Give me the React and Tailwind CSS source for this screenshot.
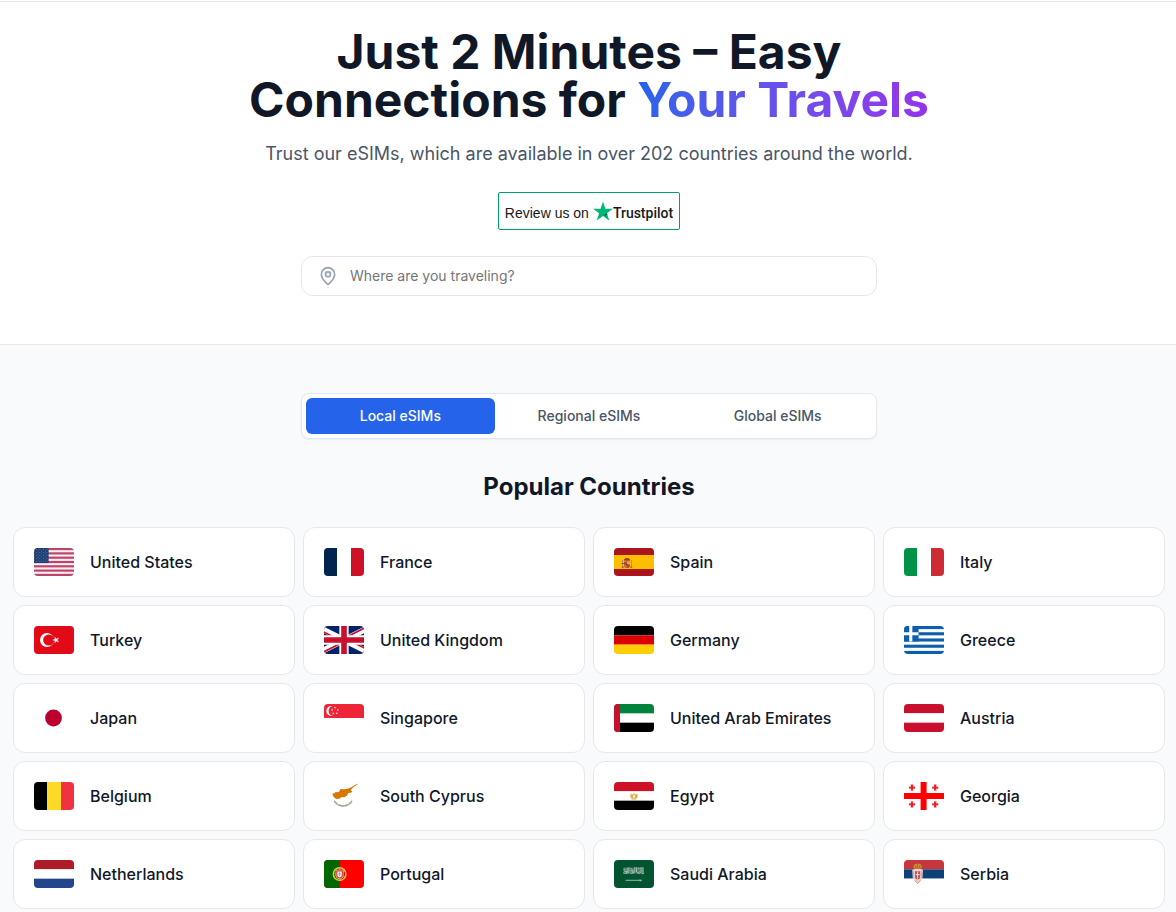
import { useState } from 'react';
import { MapPin } from 'lucide-react';

const TABS = ['Local eSIMs', 'Regional eSIMs', 'Global eSIMs'];

const COUNTRIES = [
  { code: 'us', name: 'United States', flag: UsFlag },
  { code: 'fr', name: 'France', flag: FranceFlag },
  { code: 'es', name: 'Spain', flag: SpainFlag },
  { code: 'it', name: 'Italy', flag: ItalyFlag },
  { code: 'tr', name: 'Turkey', flag: TurkeyFlag },
  { code: 'gb', name: 'United Kingdom', flag: UkFlag },
  { code: 'de', name: 'Germany', flag: GermanyFlag },
  { code: 'gr', name: 'Greece', flag: GreeceFlag },
  { code: 'jp', name: 'Japan', flag: JapanFlag },
  { code: 'sg', name: 'Singapore', flag: SingaporeFlag },
  { code: 'ae', name: 'United Arab Emirates', flag: UaeFlag },
  { code: 'at', name: 'Austria', flag: AustriaFlag },
  { code: 'be', name: 'Belgium', flag: BelgiumFlag },
  { code: 'cy', name: 'South Cyprus', flag: CyprusFlag },
  { code: 'eg', name: 'Egypt', flag: EgyptFlag },
  { code: 'ge', name: 'Georgia', flag: GeorgiaFlag },
  { code: 'nl', name: 'Netherlands', flag: NetherlandsFlag },
  { code: 'pt', name: 'Portugal', flag: PortugalFlag },
  { code: 'sa', name: 'Saudi Arabia', flag: SaudiFlag },
  { code: 'rs', name: 'Serbia', flag: SerbiaFlag },
];

// 3:2 flags use a 42x28 box, 2:1 flags 56x28; both are cropped to 40x28
function Flag({ width = 42, children }) {
  return (
    <svg
      viewBox={`0 0 ${width} 28`}
      preserveAspectRatio="xMidYMid slice"
      className="h-7 w-10 shrink-0 rounded"
      aria-hidden="true"
    >
      <rect width={width} height="28" fill="#fff" />
      {children}
    </svg>
  );
}

function VerticalBands({ colors }) {
  return (
    <Flag>
      {colors.map((color, i) => (
        <rect key={color} x={i * 14} width="14" height="28" fill={color} />
      ))}
    </Flag>
  );
}

function HorizontalBands({ colors, children }) {
  return (
    <Flag>
      {colors.map((color, i) => (
        <rect key={i} y={(i * 28) / 3} width="42" height={28 / 3} fill={color} />
      ))}
      {children}
    </Flag>
  );
}

function FranceFlag() {
  return <VerticalBands colors={['#00264f', '#ffffff', '#ce1127']} />;
}

function ItalyFlag() {
  return <VerticalBands colors={['#009246', '#ffffff', '#ce2b37']} />;
}

function BelgiumFlag() {
  return <VerticalBands colors={['#000000', '#fdda25', '#ef3340']} />;
}

function GermanyFlag() {
  return <HorizontalBands colors={['#000000', '#dd0000', '#ffce00']} />;
}

function AustriaFlag() {
  return <HorizontalBands colors={['#c8102e', '#ffffff', '#c8102e']} />;
}

function NetherlandsFlag() {
  return <HorizontalBands colors={['#ae1c28', '#ffffff', '#21468b']} />;
}

function UsFlag() {
  const stripe = 28 / 13;
  const stars = [];
  for (let row = 0; row < 9; row++) {
    for (let col = 0; col < (row % 2 ? 5 : 6); col++) {
      stars.push([1.8 + col * 3.55 + (row % 2 ? 1.78 : 0), 1.5 + row * 1.5]);
    }
  }
  return (
    <Flag width={53.2}>
      <rect width="53.2" height="28" fill="#fbeef2" />
      {[0, 1, 2, 3, 4, 5, 6].map((i) => (
        <rect key={i} y={i * stripe * 2} width="53.2" height={stripe} fill="#bc4468" />
      ))}
      <rect width="21.2" height={stripe * 7} fill="#1d3f74" />
      {stars.map(([cx, cy]) => (
        <circle key={`${cx}-${cy}`} cx={cx} cy={cy} r="0.45" fill="#8ea3c0" />
      ))}
    </Flag>
  );
}

function SpainFlag() {
  return (
    <Flag>
      <rect width="42" height="28" fill="#aa151b" />
      <rect y="7" width="42" height="14" fill="#fbbf00" />
      <path d="M9.5 12v7M18.4 12v7" stroke="#b98a5d" strokeWidth="1" />
      <path d="M8.8 19.2h2M17.2 19.2h2M8.6 15.5h2.2" stroke="#8f3b32" strokeWidth="0.9" />
      <path d="M11 13.6h6v3.6a3 2.8 0 0 1-6 0z" fill="#b4442d" />
      <path d="M14 13.6h3v3H14z" fill="#c9a3a0" />
      <path d="M11 16.7h3v3a3 3 0 0 1-3-3z" fill="#c97a20" />
      <path d="M11.3 12.8c-1-1.7.5-2.5 2.7-2.8 2.2.3 3.7 1.1 2.7 2.8z" fill="#a8392b" />
      <circle cx="14" cy="16.7" r="1" fill="#5b4a73" />
    </Flag>
  );
}

function TurkeyFlag() {
  return (
    <Flag>
      <rect width="42" height="28" fill="#e30a17" />
      <circle cx="14" cy="14" r="7" fill="#fff" />
      <circle cx="15.75" cy="14" r="5.6" fill="#e30a17" />
      <path d="M19.2 14l2.6-.85v-2.7l1.6 2.2 2.6-.85L24.4 14l1.6 2.2-2.6-.85-1.6 2.2v-2.7z" fill="#fff" />
    </Flag>
  );
}

function UkFlag() {
  return (
    <Flag width={56}>
      <rect width="56" height="28" fill="#012169" />
      <path d="M0 0l56 28M56 0L0 28" stroke="#fff" strokeWidth="5.6" />
      <path
        d="M-.8 1.7L27.2 15.7M28.8 12.3L56.8 26.3M55.2-1.3L27.2 12.7M28.8 15.3L.8 29.3"
        stroke="#c8102e"
        strokeWidth="1.7"
      />
      <path d="M28 0v28M0 14h56" stroke="#fff" strokeWidth="9.3" />
      <path d="M28 0v28M0 14h56" stroke="#c8102e" strokeWidth="5.6" />
    </Flag>
  );
}

function GreeceFlag() {
  const stripe = 28 / 9;
  return (
    <Flag>
      {[0, 2, 4, 6, 8].map((i) => (
        <rect key={i} y={i * stripe} width="42" height={stripe} fill="#0d5eaf" />
      ))}
      <rect width={stripe * 5} height={stripe * 5} fill="#0d5eaf" />
      <path
        d={`M${stripe * 2.5} 0v${stripe * 5}M0 ${stripe * 2.5}h${stripe * 5}`}
        stroke="#fff"
        strokeWidth={stripe}
      />
    </Flag>
  );
}

function JapanFlag() {
  return (
    <Flag>
      <circle cx="20.5" cy="14" r="8.4" fill="#bc002d" />
    </Flag>
  );
}

function SingaporeFlag() {
  return (
    <Flag>
      <rect width="42" height="14" fill="#ee2536" />
      <circle cx="8.3" cy="7" r="5" fill="#fff" />
      <circle cx="10.4" cy="7" r="4.9" fill="#ee2536" />
      {[[12, 3.6], [9.2, 5.9], [14.8, 5.9], [10.3, 9.3], [13.7, 9.3]].map(([cx, cy]) => (
        <circle key={`${cx}-${cy}`} cx={cx} cy={cy} r="0.85" fill="#fbc4c9" />
      ))}
    </Flag>
  );
}

function UaeFlag() {
  return (
    <Flag width={56}>
      <rect width="56" height="9.33" fill="#00843d" />
      <rect y="18.67" width="56" height="9.33" fill="#000" />
      <rect width="14" height="28" fill="#c8102e" />
    </Flag>
  );
}

function CyprusFlag() {
  return (
    <Flag>
      <path
        d="M9.6 11.6l1.8-.3 1.3-1.2 2.3.2 1.4-1 1-2.4 3.5.3 3.6-.4 3.4-1.3 3.6-2.3 3.2-1.6-.4.9-3.3 2.3-2.6 2.5-.5 1.3 1.4.6-1.2 1.5-2.8.3-1.2 2.5-2.7 1.8-2.8-.3-1.8 1.6-3.3.4-2.4-1.4-1.4-2.3z"
        fill="#d57800"
      />
      <path
        d="M11.3 18.8c1.4 3.3 4.6 5 8.8 5.2M28.9 18.8c-1.4 3.3-4.6 5-8.8 5.2"
        fill="none"
        stroke="#9da28f"
        strokeWidth="1.5"
      />
      <path d="M12 20.8l3 .2M14 22.8l3.4-.7M28.2 20.8l-3 .2M26.2 22.8l-3.4-.7M18.7 24.8l2.8-1.2" stroke="#b7bbae" strokeWidth="0.9" />
    </Flag>
  );
}

function EgyptFlag() {
  return (
    <HorizontalBands colors={['#ce1126', '#ffffff', '#000000']}>
      <path d="M17.4 11.4l2.6.8.6-1.1h.8l.6 1.1 2.6-.8v4.4l-1.6 1.2h-4l-1.6-1.2z" fill="#e6c875" />
      <path d="M18.2 12.4v3.2M19.4 12.6v3.4M22.6 12.6v3.4M23.8 12.4v3.2M18.6 17.2h4.8" stroke="#c99f3a" strokeWidth="0.6" />
      <path d="M20.1 13.2h1.8v2.3l-.9.8-.9-.8z" fill="#f6edd4" />
    </HorizontalBands>
  );
}

function GeorgiaFlag() {
  return (
    <Flag>
      <path d="M20.6 0v28M0 14h42" stroke="#f00" strokeWidth="6" />
      {[[9, 5.6], [32.2, 5.6], [9, 22.4], [32.2, 22.4]].map(([x, y]) => (
        <path
          key={`${x}-${y}`}
          d={`M${x - 3} ${y - 1.2}l2 .3-.3-2.1h2.6l-.3 2.1 2-.3v2.4l-2-.3.3 2.1h-2.6l.3-2.1-2 .3z`}
          fill="#ee1c25"
        />
      ))}
    </Flag>
  );
}

function PortugalFlag() {
  return (
    <Flag>
      <rect width="42" height="28" fill="#f00" />
      <rect width="16.8" height="28" fill="#060" />
      <circle cx="16.6" cy="14" r="6.3" fill="none" stroke="#dfc92e" strokeWidth="1.5" />
      <path d="M10.6 12.3c4 3.4 8.4 4.6 11.8 4M10.8 16.8c4-3.6 8-5.2 11.4-5.4M16.6 7.8v12.4" fill="none" stroke="#c9b22e" strokeWidth="0.7" />
      <path d="M12.9 10h7.4v5a3.7 3.9 0 0 1-7.4 0z" fill="#d8362f" stroke="#eed7ad" strokeWidth="0.6" />
      <path d="M14.4 11.4h4.4v3.6a2.2 2.4 0 0 1-4.4 0z" fill="#eef0f5" />
      <path d="M16.6 12v4.4M15 13.9h3.2" stroke="#7c8fbf" strokeWidth="0.7" />
    </Flag>
  );
}

function SaudiFlag() {
  return (
    <Flag>
      <rect width="42" height="28" fill="#005430" />
      <rect x="10.4" y="7.6" width="20" height="6" fill="#3f7d60" />
      <g fill="none" stroke="#b9d0c4" strokeWidth="0.8" strokeLinecap="round">
        <path d="M10.6 9.2c1.2-1 2 .4.8 1.2M10.5 13c1.6.9 3.4.6 3.7-.8V8M15.9 7.5v4.4c0 1.4-2 1.8-2.8 1" />
        <path d="M17.4 13.2c2 .6 3-.5 2.8-2.2L18 8.2M21.8 7.3v4c0 1.6-1.2 2-2.4 1.8M23.6 7.5v4.6c.8 1.4 2.6 1.1 2.8-.4" />
        <path d="M25.2 8c1.1-.6 1.7.6.8 1.3M28 7.4v4.5c-.2 1.2-1.6 1.7-2.5 1.4M29.9 7.4l.2 5.4M11.8 11.5h2M17.5 10.7l2 .4M29 13.6h1.5" />
      </g>
      <path d="M13 20.3h15.5M27 19.8l.2 1.2" stroke="#a9c4b6" strokeWidth="0.9" strokeLinecap="round" />
    </Flag>
  );
}

function SerbiaFlag() {
  return (
    <HorizontalBands colors={['#c6363c', '#0c4076', '#ffffff']}>
      <path d="M11 8.2c-1.6-3 .6-4.4 3.6-4.7 3 .3 5.2 1.7 3.6 4.7z" fill="#cf8f35" />
      <path d="M14.6 3.4v4.6M12 5l1 3M17.2 5l-1 3" stroke="#a4402f" strokeWidth="0.6" />
      <path d="M9.2 9.8l3-1h4.8l3 1-.6 8.4-2.2 3.4-2.6 2.2-2.6-2.2-2.2-3.4z" fill="#e8d3d3" />
      <path d="M10.6 11v7.4M18.6 11v7.4M9.6 14.2h1.6M18 14.2h1.6" stroke="#b69aa6" strokeWidth="0.6" />
      <path d="M12 11.2h5.2v5.2a2.6 2.9 0 0 1-5.2 0z" fill="#c6504f" />
      <path d="M14.6 11.6v7M12.6 14.6h4" stroke="#f3e3e1" strokeWidth="1" />
      <path d="M11.8 20.4l2.8 3 2.8-3" fill="none" stroke="#d39a70" strokeWidth="0.9" />
    </HorizontalBands>
  );
}

function TrustpilotBadge() {
  return (
    <a
      href="#trustpilot"
      className="flex h-[38px] items-center rounded-xs border border-[#00a06c] bg-white px-1.5 pt-1 font-['Liberation_Sans',Arial,sans-serif] text-[#191919]"
    >
      <span className="text-sm">Review us on</span>
      <svg viewBox="0 0 20 19" className="mb-1 ml-1 size-5 shrink-0" aria-hidden="true">
        <path d="M10 0l2.4 7.2H20l-6.1 4.5L16.2 19 10 14.5 3.8 19l2.3-7.3L0 7.2h7.6z" fill="#00b67a" />
        <path d="M14.4 13.3l-.5-1.6-3.9 2.8z" fill="#005128" />
      </svg>
      <span className="font-[Roboto,sans-serif] text-sm font-medium">Trustpilot</span>
    </a>
  );
}

export default function App() {
  const [activeTab, setActiveTab] = useState(TABS[0]);
  const [query, setQuery] = useState('');

  return (
    <div className="flex min-h-screen flex-col bg-gray-50 font-[Inter,sans-serif] text-gray-900">
      <header className="h-0.5 border-b border-gray-200 bg-white" />

      <section className="flex flex-col items-center border-b border-gray-200 bg-white pt-[26px] pb-12 pl-0.5">
        <h1 className="max-w-3xl text-center text-5xl leading-none font-bold">
          Just 2 Minutes – Easy
          <br />
          Connections for{' '}
          <span className="bg-linear-to-r from-[#2563eb] to-[#9333ea] bg-clip-text text-transparent">Your Travels</span>
        </h1>
        <p className="mt-4 mb-6 text-center text-lg leading-7 text-gray-600">
          Trust our eSIMs, which are available in over 202 countries around the world.
        </p>
        <TrustpilotBadge />
        <label className="mt-[26px] flex h-10 w-full max-w-xl items-center gap-3 rounded-xl border border-gray-200 bg-white px-4">
          <MapPin className="size-5 shrink-0 text-gray-400" aria-hidden="true" />
          <input
            type="text"
            value={query}
            onChange={(e) => setQuery(e.target.value)}
            placeholder="Where are you traveling?"
            aria-label="Where are you traveling?"
            className="w-full bg-transparent text-sm outline-none placeholder:text-[#757575]"
          />
        </label>
      </section>

      <main className="flex flex-1 flex-col items-center pt-12 pl-0.5">
        <div role="tablist" className="grid w-full max-w-xl grid-cols-3 rounded-lg border border-gray-200 bg-white p-1 shadow-xs">
          {TABS.map((tab) => (
            <button
              key={tab}
              type="button"
              role="tab"
              aria-selected={tab === activeTab}
              onClick={() => setActiveTab(tab)}
              className={`h-9 rounded-md text-sm font-medium ${
                tab === activeTab ? 'bg-[#2563eb] text-white' : 'text-gray-600'
              }`}
            >
              {tab}
            </button>
          ))}
        </div>

        <h2 className="mt-8 mb-6 text-2xl font-bold">Popular Countries</h2>

        <div className="grid w-full max-w-6xl grid-cols-2 gap-2 lg:grid-cols-4">
          {COUNTRIES.map(({ code, name, flag: CountryFlag }) => (
            <a
              key={code}
              href={`#${code}`}
              className="flex items-center gap-4 rounded-xl border border-gray-200 bg-white p-5"
            >
              <CountryFlag />
              <span className="font-medium">{name}</span>
            </a>
          ))}
        </div>
      </main>
    </div>
  );
}
